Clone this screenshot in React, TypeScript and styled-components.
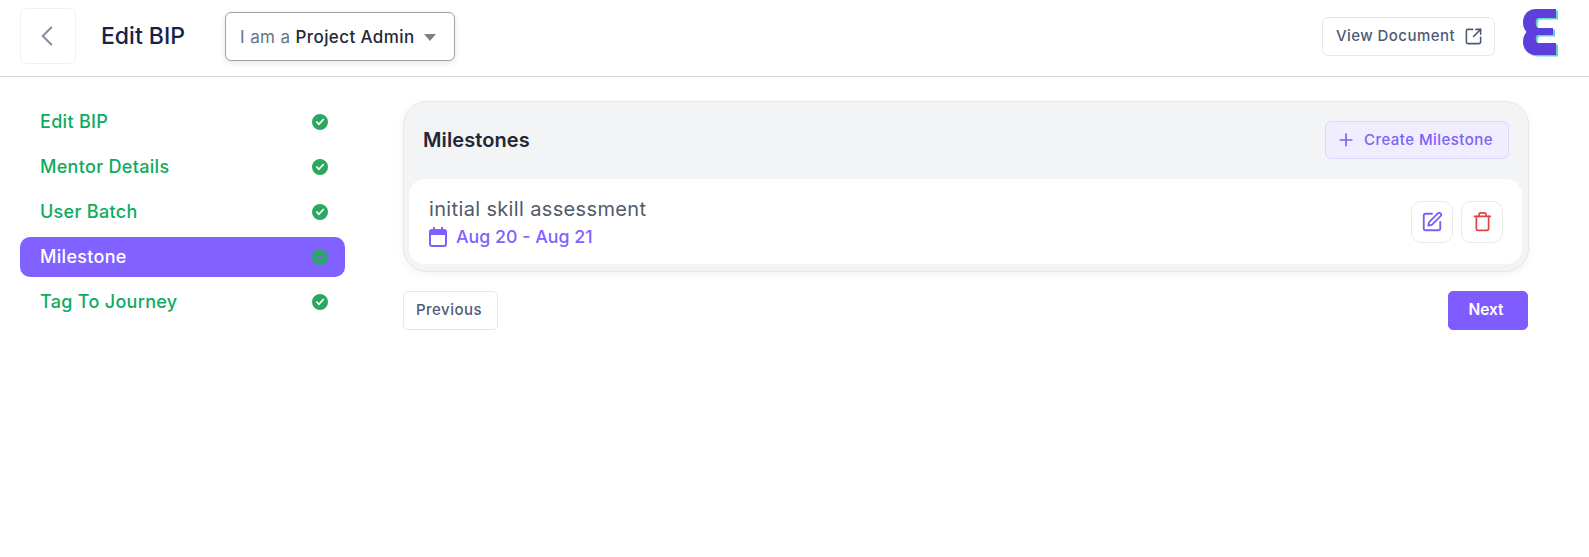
import React from "react";
import styled, { createGlobalStyle } from "styled-components";
import { ChevronLeft, Plus, SquareArrowOutUpRight, SquarePen, Trash } from "lucide-react";

const steps = ["Edit BIP", "Mentor Details", "User Batch", "Milestone", "Tag To Journey"];

const App: React.FC = () => {
  return (
    <>
      <GlobalStyle />
      <Header>
        <BackButton>
          <ChevronLeft size={34} strokeWidth={1.5} color="#8791a5" />
        </BackButton>
        <PageTitle>Edit BIP</PageTitle>
        <RoleSelect>
          <RoleLabel>I am a</RoleLabel>
          <RoleValue>Project Admin</RoleValue>
          <Caret />
        </RoleSelect>
        <HeaderRight>
          <DocButton>
            <DocLabel>View Document</DocLabel>
            <SquareArrowOutUpRight size={19} strokeWidth={2} />
          </DocButton>
          <LogoWrap>
            <Logo />
          </LogoWrap>
        </HeaderRight>
      </Header>
      <Body>
        <Sidebar>
          {steps.map(step => (
            <Step key={step} $active={step === "Milestone"}>
              <StepLabel>{step}</StepLabel>
              <CheckIcon />
            </Step>
          ))}
        </Sidebar>
        <Main>
          <Panel>
            <PanelHead>
              <PanelTitle>Milestones</PanelTitle>
              <CreateButton>
                <Plus size={20} strokeWidth={2} />
                Create Milestone
              </CreateButton>
            </PanelHead>
            <Card>
              <div>
                <CardTitle>initial skill assessment</CardTitle>
                <CardDate>
                  <CalendarIcon />
                  Aug 20 - Aug 21
                </CardDate>
              </div>
              <CardActions>
                <IconButton>
                  <SquarePen size={22} strokeWidth={2} color="#7c5cfc" />
                </IconButton>
                <IconButton>
                  <Trash size={21} strokeWidth={2} color="#e5434b" />
                </IconButton>
              </CardActions>
            </Card>
          </Panel>
          <Footer>
            <PrevButton>Previous</PrevButton>
            <NextButton>Next</NextButton>
          </Footer>
        </Main>
      </Body>
    </>
  );
};

const CheckIcon = () => (
  <svg width="18" height="18" viewBox="0 0 18 18">
    <path
      fillRule="evenodd"
      fill="#2ba75f"
      d="M9 1a8 8 0 1 1 0 16A8 8 0 0 1 9 1Zm4.4 5.6-1.2-1.2-4.3 4.5-2-2-1.2 1.2 3.2 3.3 5.5-5.8Z"
    />
  </svg>
);

const CalendarIcon = () => (
  <svg width="18" height="20" viewBox="0 0 18 20">
    <path
      fillRule="evenodd"
      fill="#7f5fff"
      d="M4 0h2v2h6V0h2v2h1a3 3 0 0 1 3 3v12a3 3 0 0 1-3 3H3a3 3 0 0 1-3-3V5a3 3 0 0 1 3-3h1V0ZM2 8v9a1 1 0 0 0 1 1h12a1 1 0 0 0 1-1V8H2Z"
    />
  </svg>
);

const logoPath =
  "M13 0H33V9H15c-3 0-3 10 0 10H30V26H15c-3 0-3 8 0 8H33V46H13C5 46 0 40 0 33c0-4 1-7 3.5-10C1 20 0 17 0 13 0 6 5 0 13 0Z";

const Logo = () => (
  <svg width="36" height="48" viewBox="0 0 36 48">
    <path fill="#5fd6c8" transform="translate(2 1.5)" d={logoPath} />
    <path fill="#5f3fdc" d={logoPath} />
  </svg>
);

const GlobalStyle = createGlobalStyle`
  html, body {
    margin: 0;
    padding: 0;
    background: #ffffff;
    font-family: Inter, "Liberation Sans", sans-serif;
  }
  * {
    box-sizing: border-box;
  }
`;

const Header = styled.header`
  display: flex;
  align-items: center;
  height: 77px;
  padding: 0 30px 4px 20px;
  border-bottom: 1px solid #d4d5d9;
`;

const BackButton = styled.button`
  display: flex;
  align-items: center;
  justify-content: center;
  width: 56px;
  height: 56px;
  padding: 0 2px 0 0;
  background: #fff;
  border: 1px solid #eef0f3;
  border-radius: 6px;
`;

const PageTitle = styled.h1`
  margin: 0 0 0 25px;
  width: 124px;
  font-size: 23px;
  font-weight: 500;
  color: #14234b;
`;

const RoleSelect = styled.div`
  display: flex;
  align-items: center;
  width: 230px;
  height: 49px;
  margin-top: 1px;
  padding: 0 14px;
  background: #fff;
  border: 1px solid #a3a3a3;
  border-radius: 6px;
  box-shadow: 0 2px 6px rgba(0, 0, 0, 0.1);
  font-size: 17px;
  letter-spacing: 0.4px;
`;

const RoleLabel = styled.span`
  color: #64748b;
  margin-right: 5px;
`;

const RoleValue = styled.span`
  color: #1f2937;
  font-weight: 450;
`;

const Caret = styled.span`
  margin: 2px 0 0 9px;
  border-left: 6px solid transparent;
  border-right: 6px solid transparent;
  border-top: 7px solid #808080;
`;

const HeaderRight = styled.div`
  display: flex;
  align-items: center;
  gap: 28px;
  margin-left: auto;
`;

const DocButton = styled.button`
  display: flex;
  align-items: center;
  gap: 9px;
  height: 39px;
  padding: 0 11px 0 13px;
  background: #fff;
  border: 1px solid #e5e7eb;
  border-radius: 6px;
  font: 450 15px Inter, sans-serif;
  letter-spacing: 0.45px;
  color: #4f5b76;
`;

const DocLabel = styled.span`
  margin-bottom: 2px;
`;

const LogoWrap = styled.div`
  display: flex;
  margin-bottom: 7px;
`;

const Body = styled.div`
  display: flex;
  padding: 22px 60px 0 20px;
`;

const Sidebar = styled.nav`
  display: flex;
  flex-direction: column;
  gap: 5px;
  width: 325px;
  margin-right: 58px;
  margin-top: 3px;
`;

const Step = styled.div<{ $active?: boolean }>`
  display: flex;
  align-items: center;
  justify-content: space-between;
  height: 40px;
  padding: 0 16px 0 20px;
  border-radius: 10px;
  font-size: 18px;
  font-weight: 500;
  letter-spacing: 0.3px;
  color: ${p => (p.$active ? "#ffffff" : "#0eab5e")};
  background: ${p => (p.$active ? "#8161ff" : "transparent")};
`;

const StepLabel = styled.span`
  margin-bottom: 2px;
`;

const Main = styled.main`
  flex: 1;
  min-width: 0;
  margin-top: 2px;
`;

const Panel = styled.section`
  height: 171px;
  padding: 0 6px 6px 5px;
  background: #f3f4f6;
  border: 1px solid #e5e7eb;
  border-radius: 24px;
  box-shadow: 0 2px 8px rgba(0, 0, 0, 0.05);
`;

const PanelHead = styled.div`
  display: flex;
  align-items: center;
  justify-content: space-between;
  height: 77px;
  padding: 0 13px 2px 14px;
`;

const PanelTitle = styled.h2`
  margin: 0;
  font-size: 20px;
  font-weight: 600;
  letter-spacing: 0.1px;
  color: #1f2733;
`;

const CreateButton = styled.button`
  display: flex;
  align-items: center;
  gap: 8px;
  width: 184px;
  height: 38px;
  padding: 0 10px;
  background: #f0edff;
  border: 1px solid #ddd6ff;
  border-radius: 6px;
  font: 500 15px Inter, sans-serif;
  letter-spacing: 0.45px;
  color: #7b61f5;
`;

const Card = styled.div`
  display: flex;
  align-items: center;
  justify-content: space-between;
  height: 85px;
  padding: 0 19px 0 20px;
  background: #fff;
  border-radius: 16px;
`;

const CardTitle = styled.div`
  font-size: 20px;
  line-height: 28px;
  letter-spacing: 0.35px;
  color: #4f5b6b;
`;

const CardDate = styled.div`
  display: flex;
  align-items: center;
  gap: 9px;
  margin-top: 2px;
  font-size: 17.8px;
  line-height: 24px;
  font-weight: 450;
  color: #8161ff;
`;

const CardActions = styled.div`
  display: flex;
  gap: 8px;
`;

const IconButton = styled.button`
  display: flex;
  align-items: center;
  justify-content: center;
  width: 42px;
  height: 42px;
  padding: 0;
  background: #fff;
  border: 1px solid #e9eaee;
  border-radius: 10px;
`;

const Footer = styled.div`
  display: flex;
  justify-content: space-between;
  margin-top: 19px;
  padding-right: 1px;
`;

const PrevButton = styled.button`
  width: 95px;
  height: 39px;
  padding: 0 3px 2px 0;
  background: #fff;
  border: 1px solid #e5e7eb;
  border-radius: 5px;
  font: 450 15px Inter, sans-serif;
  letter-spacing: 0.5px;
  color: #4f5b76;
`;

const NextButton = styled.button`
  width: 80px;
  height: 39px;
  padding: 0 4px 2px 0;
  background: #7f5cff;
  border: 1px solid #7f5cff;
  border-radius: 5px;
  font: 600 15.5px Inter, sans-serif;
  color: #fff;
`;

export default App;
